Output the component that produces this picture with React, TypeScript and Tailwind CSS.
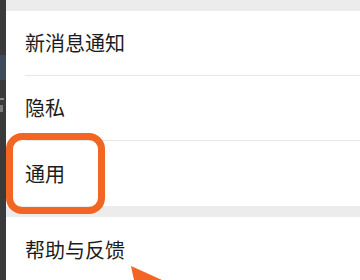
// 設定頁：通用 項目標註截圖
const rows = [
  { group: 1, items: ['新消息通知', '隐私', '通用'] },
  { group: 2, items: ['帮助与反馈'] },
];

export default function App() {
  return (
    <div
      className="relative flex w-[360px] h-[280px] overflow-hidden bg-white"
      style={{ fontFamily: '"Noto Sans CJK SC", "Noto Sans", sans-serif' }}
    >
      {/* 左側：背景 app 的邊緣 */}
      <div className="flex w-[6px] shrink-0 flex-col overflow-hidden bg-[#3a3a3a]">
        <div className="h-[55px] shrink-0" />
        <div className="h-[25px] shrink-0 bg-[#3d4b5c]" />
        <div className="h-[18px] shrink-0" />
        <div className="h-[2px] w-[4px] shrink-0 bg-[#8a8a8a]" />
        <div className="h-[5px] shrink-0" />
        <div className="h-[7px] w-[3px] shrink-0 bg-[#7a7a7a]" />
      </div>

      {/* 右側：設定列表 */}
      <div className="flex flex-1 flex-col bg-[#ececec]">
        {rows.map((g) => (
          <div key={g.group} className="mt-[11px] bg-white">
            {g.items.map((t, i) => (
              <div key={t} className="pl-[19px]">
                <div
                  className={
                    'flex h-[65px] items-center text-[20px] text-[#1c1c1c] ' +
                    (i < g.items.length - 1 ? 'border-b border-[#e6e6e6]' : '')
                  }
                >
                  {t}
                </div>
              </div>
            ))}
          </div>
        ))}
      </div>

      {/* 標註框 */}
      <div className="pointer-events-none absolute left-[6px] top-[133px] h-[81px] w-[99px] rounded-[16px] border-[7px] border-[#f26522]" />

      {/* 標註箭頭 */}
      <svg className="pointer-events-none absolute left-0 top-0" width="360" height="280">
        <polygon points="131,266 162,280 134,280" fill="#f26522" />
      </svg>
    </div>
  );
}
